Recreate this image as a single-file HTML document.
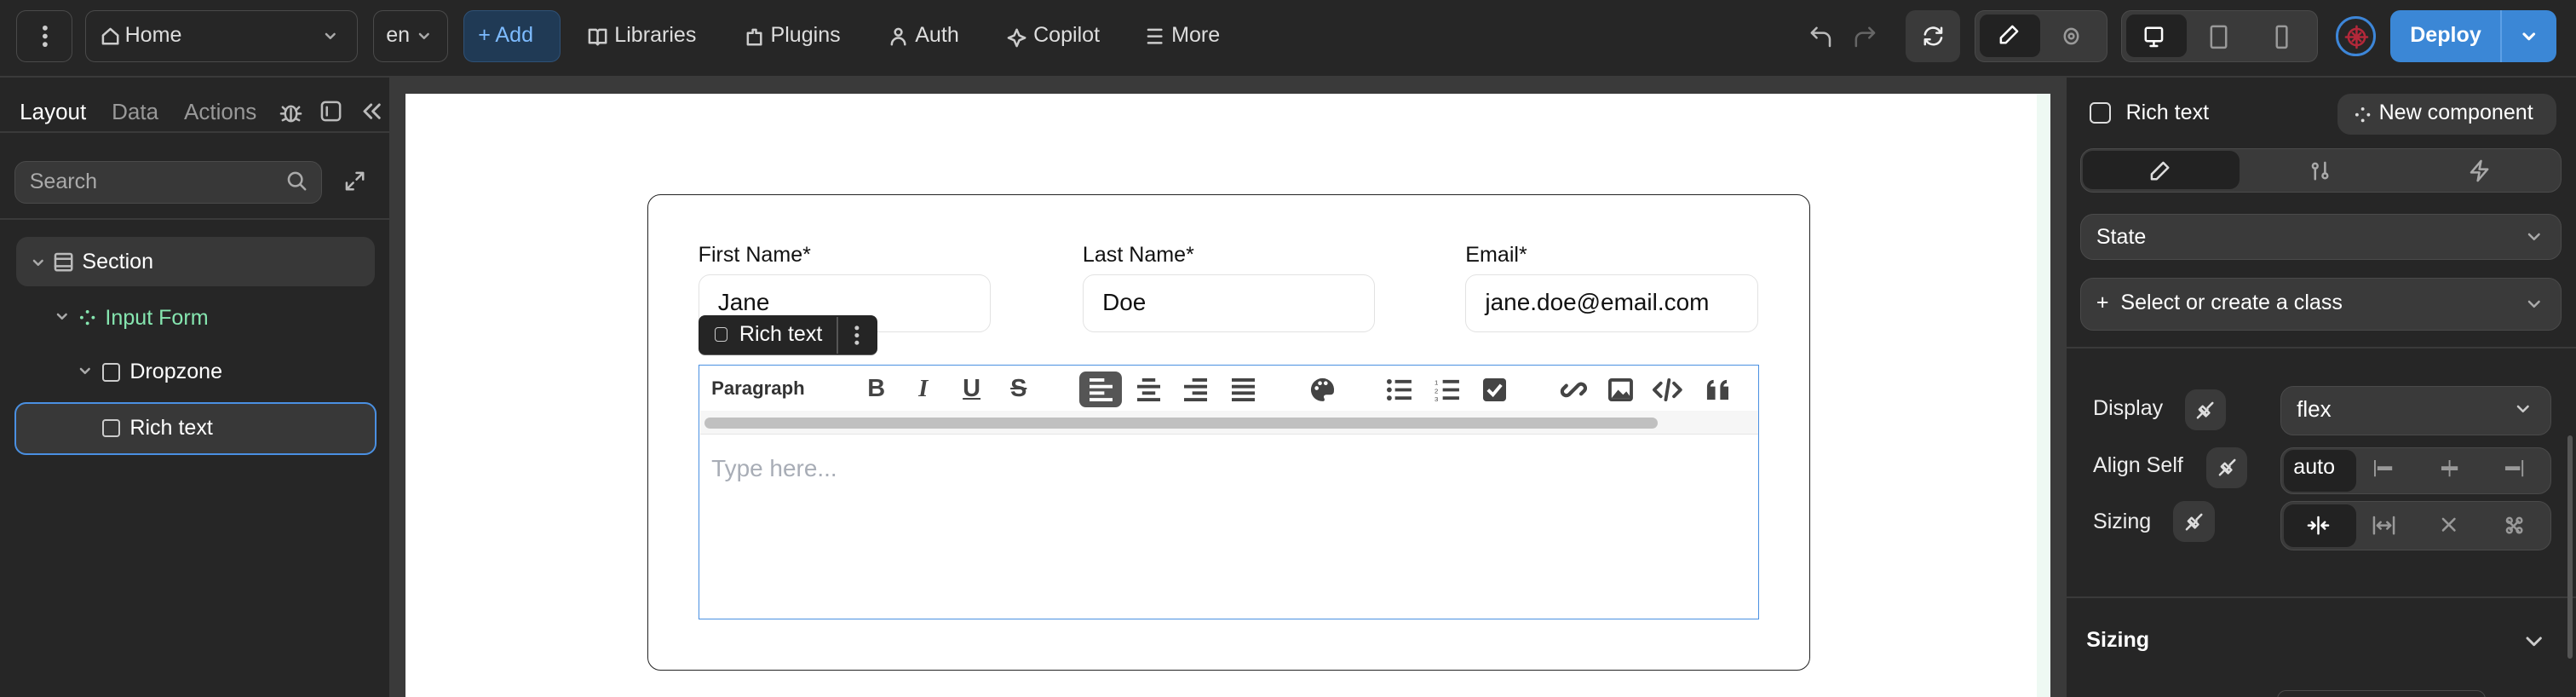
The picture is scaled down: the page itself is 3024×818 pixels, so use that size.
<!DOCTYPE html>
<html><head><meta charset="utf-8"><style>
html,body{margin:0;padding:0;width:3024px;height:818px;overflow:hidden;background:#262626}
#r{position:absolute;left:0;top:0;width:1568px;height:424px;zoom:1.928571;font-family:"Liberation Sans",sans-serif;color:#e8e8e8;font-size:13px;overflow:hidden;background:#262626}
.a{position:absolute}
.btn{position:absolute;border:1px solid #4a4a4a;border-radius:6px;box-sizing:border-box}
.t{position:absolute;white-space:nowrap;line-height:1}
svg{position:absolute;overflow:visible}
.ic{fill:none;stroke:currentColor;stroke-width:1.3;stroke-linecap:round;stroke-linejoin:round}
</style></head><body><div id="r">
<!-- top bar -->
<div class="a" style="left:0;top:46px;width:1568px;height:1px;background:#3a3a3a"></div>
<div class="btn" style="left:10px;top:6px;width:34px;height:32px"></div>
<svg style="left:26px;top:15px" width="3" height="14"><circle cx="1.5" cy="2" r="1.5" fill="#ccc"/><circle cx="1.5" cy="7" r="1.5" fill="#ccc"/><circle cx="1.5" cy="12" r="1.5" fill="#ccc"/></svg>
<div class="btn" style="left:52px;top:6px;width:166px;height:32px"></div>
<svg class="ic" style="left:61px;top:16px;color:#ccc" width="12" height="12"><path d="M1.5 5.5L6 1.5l4.5 4v5h-9z"/></svg>
<div class="t" style="left:76px;top:15px;color:#ddd">Home</div>
<svg class="ic" style="left:198px;top:20px;color:#aaa" width="6" height="4"><path d="M0.5 0.5l2.5 2.5 2.5-2.5"/></svg>
<div class="btn" style="left:227px;top:6px;width:46px;height:32px"></div>
<div class="t" style="left:235px;top:15px;color:#ddd">en</div>
<svg class="ic" style="left:255px;top:20px;color:#aaa" width="6" height="4"><path d="M0.5 0.5l2.5 2.5 2.5-2.5"/></svg>
<div class="btn" style="left:282px;top:6px;width:59px;height:32px;background:#203a55;border-color:#2f5176"></div>
<div class="t" style="left:291px;top:15px;color:#7dbbff">+ Add</div>
<svg class="ic" style="left:358px;top:16px;color:#ccc" width="12" height="12"><path d="M1 2h4l1 1 1-1h4v8H7l-1 1-1-1H1zM6 3v8"/></svg>
<div class="t" style="left:374px;top:15px;color:#ddd">Libraries</div>
<svg class="ic" style="left:453px;top:16px;color:#ccc" width="12" height="12"><path d="M2 4h3V2h2v2h3v7H2z"/></svg>
<div class="t" style="left:469px;top:15px;color:#ddd">Plugins</div>
<svg class="ic" style="left:541px;top:16px;color:#ccc" width="12" height="12"><circle cx="6" cy="3.5" r="2"/><path d="M2 11a4 4 0 0 1 8 0"/></svg>
<div class="t" style="left:557px;top:15px;color:#ddd">Auth</div>
<svg class="ic" style="left:613px;top:15px;color:#ccc" width="12" height="13"><path d="M6 3l1.5 3.5L11 8l-3.5 1.5L6 13l-1.5-3.5L1 8l3.5-1.5z"/></svg>
<div class="t" style="left:629px;top:15px;color:#ddd">Copilot</div>
<svg class="ic" style="left:698px;top:17px;color:#ccc" width="10" height="10"><path d="M1 1h8M1 5h8M1 9h8"/></svg>
<div class="t" style="left:713px;top:15px;color:#ddd">More</div>
<svg class="ic" style="left:1100px;top:14px;color:#bbb" width="16" height="16"><path d="M3 6h7a4 4 0 0 1 4 4v4M3 6l3-3M3 6l3 3"/></svg>
<svg class="ic" style="left:1128px;top:14px;color:#666" width="16" height="16"><path d="M13 6H6a4 4 0 0 0-4 4v4M13 6l-3-3M13 6l-3 3"/></svg>
<div class="btn" style="left:1160px;top:6px;width:33px;height:32px;background:#3a3a3a;border-color:#3a3a3a"></div>
<svg class="ic" style="left:1169px;top:14px;color:#eee" width="16" height="16"><path d="M3 7a5 5 0 0 1 9-2l1 1M13 9a5 5 0 0 1-9 2l-1-1M13 3v3h-3M3 13v-3h3"/></svg>
<div class="btn" style="left:1202px;top:6px;width:81px;height:32px;background:#3a3a3a"></div>
<div class="a" style="left:1205px;top:9px;width:37px;height:26px;border-radius:5px;background:#222"></div>
<svg class="ic" style="left:1216px;top:15px;color:#fff" width="14" height="14"><path d="M9 1l3 3-7 7H2V8z"/></svg>
<svg class="ic" style="left:1254px;top:15px;color:#999" width="14" height="14"><ellipse cx="7" cy="7" rx="4" ry="4.5"/><circle cx="7" cy="7" r="1.5"/></svg>
<div class="btn" style="left:1291px;top:6px;width:120px;height:32px;background:#3a3a3a"></div>
<div class="a" style="left:1294px;top:9px;width:37px;height:26px;border-radius:5px;background:#222"></div>
<svg class="ic" style="left:1303px;top:14px;color:#fff" width="16" height="16"><rect x="3" y="3" width="10" height="8" rx="1"/><path d="M8 11v2M6 14h4"/></svg>
<svg class="ic" style="left:1344px;top:14px;color:#999" width="14" height="16"><rect x="2" y="2" width="9" height="13" rx="1"/></svg>
<svg class="ic" style="left:1383px;top:14px;color:#999" width="14" height="16"><rect x="3" y="2" width="6" height="13" rx="1"/></svg>
<div class="a" style="left:1422px;top:10px;width:21px;height:21px;border:2px solid #3d86d8;border-radius:50%;background:#262626"></div>
<svg class="ic" style="left:1427px;top:15px;color:#b4283a" width="15" height="15"><circle cx="7.5" cy="7.5" r="5"/><path d="M7.5 1v13M1 7.5h13M5 5l5 5M10 5l-5 5"/></svg>
<div class="a" style="left:1455px;top:6px;width:101px;height:32px;border-radius:6px;background:#3b87d6"></div>
<div class="a" style="left:1522px;top:6px;width:1px;height:32px;background:#5da0e6"></div>
<div class="t" style="left:1467px;top:15px;color:#fff;font-weight:bold">Deploy</div>
<svg class="ic" style="left:1536px;top:20px;color:#fff;stroke-width:1.6" width="7" height="5"><path d="M0.5 0.5l3 3 3-3"/></svg>

<!-- left panel -->
<div class="a" style="left:237px;top:47px;width:1px;height:377px;background:#3a3a3a"></div>
<div class="t" style="left:12px;top:61px;color:#fff;font-size:13.5px">Layout</div>
<div class="t" style="left:68px;top:61px;color:#999;font-size:13.5px">Data</div>
<div class="t" style="left:112px;top:61px;color:#999;font-size:13.5px">Actions</div>
<svg class="ic" style="left:170px;top:61px;color:#bbb" width="14" height="14"><ellipse cx="7" cy="8" rx="3.5" ry="4.5"/><path d="M1 8h2M11 8h2M2 4l2 2M12 4l-2 2M2 12l2-1M12 12l-2-1M7 5v7"/></svg>
<svg class="ic" style="left:195px;top:61px;color:#bbb" width="14" height="14"><rect x="1" y="1" width="11" height="11" rx="2"/><path d="M4 4v5"/></svg>
<svg class="ic" style="left:221px;top:63px;color:#bbb;stroke-width:1.5" width="11" height="10"><path d="M5 1L1 5l4 4M10 1L6 5l4 4"/></svg>
<div class="a" style="left:0;top:80px;width:237px;height:1px;background:#3a3a3a"></div>
<div class="a" style="left:9px;top:98px;width:187px;height:26px;border:1px solid #4a4a4a;border-radius:7px;background:#383838;box-sizing:border-box"></div>
<div class="t" style="left:18px;top:104px;color:#aaa;font-size:13px">Search</div>
<svg class="ic" style="left:175px;top:104px;color:#aaa" width="12" height="12"><circle cx="5" cy="5" r="4"/><path d="M8 8l3 3"/></svg>
<svg class="ic" style="left:210px;top:104px;color:#bbb" width="12" height="12"><path d="M7 1h4v4M11 1L7 5M5 11H1V7M1 11l4-4"/></svg>
<div class="a" style="left:0;top:133px;width:237px;height:1px;background:#3a3a3a"></div>
<div class="a" style="left:10px;top:144px;width:218px;height:30px;border-radius:7px;background:#383838"></div>
<svg class="ic" style="left:20px;top:158px;color:#aaa" width="6" height="4"><path d="M0.5 0.5l2.5 2.5 2.5-2.5"/></svg>
<svg class="ic" style="left:33px;top:154px;color:#bbb" width="12" height="12"><rect x="0.5" y="0.5" width="10" height="10" rx="1"/><path d="M0.5 3.5h10M0.5 8h10"/></svg>
<div class="t" style="left:50px;top:153px;color:#fff;font-size:13px">Section</div>
<svg class="ic" style="left:35px;top:191px;color:#aaa" width="6" height="4"><path d="M0.5 0.5l2.5 2.5 2.5-2.5"/></svg>
<svg style="left:48px;top:188px" width="10" height="10"><circle cx="5" cy="1.5" r="1" fill="#86e6b0"/><circle cx="1.5" cy="5" r="1" fill="#86e6b0"/><circle cx="8.5" cy="5" r="1" fill="#86e6b0"/><circle cx="5" cy="8.5" r="1" fill="#86e6b0"/></svg>
<div class="t" style="left:64px;top:187px;color:#86e6b0;font-size:13px">Input Form</div>
<svg class="ic" style="left:49px;top:224px;color:#aaa" width="6" height="4"><path d="M0.5 0.5l2.5 2.5 2.5-2.5"/></svg>
<div class="a" style="left:62px;top:221px;width:9px;height:9px;border:1.2px solid #ccc;border-radius:2px"></div>
<div class="t" style="left:79px;top:220px;color:#fff;font-size:13px">Dropzone</div>
<div class="a" style="left:9px;top:245px;width:220px;height:32px;border:1.3px solid #4a90e2;border-radius:7px;background:#383838;box-sizing:border-box"></div>
<div class="a" style="left:62px;top:255px;width:9px;height:9px;border:1.2px solid #ccc;border-radius:2px"></div>
<div class="t" style="left:79px;top:254px;color:#fff;font-size:13px">Rich text</div>

<!-- canvas -->
<div class="a" style="left:238px;top:47px;width:1019px;height:377px;background:#3a3a3a"></div>
<div class="a" style="left:247px;top:57px;width:1001px;height:367px;background:#fff"></div>
<div class="a" style="left:1240px;top:57px;width:8px;height:367px;background:#eef9f3"></div>
<div class="a" style="left:394px;top:118px;width:708px;height:290px;border:1px solid #222;border-radius:8px;box-sizing:border-box"></div>
<div class="t" style="left:425px;top:149px;color:#111;font-size:13px">First Name*</div>
<div class="t" style="left:659px;top:149px;color:#111;font-size:13px">Last Name*</div>
<div class="t" style="left:892px;top:149px;color:#111;font-size:13px">Email*</div>
<div class="a" style="left:425px;top:167px;width:178px;height:35px;border:1px solid #e2e2e2;border-radius:7px;box-sizing:border-box"></div>
<div class="a" style="left:659px;top:167px;width:178px;height:35px;border:1px solid #e2e2e2;border-radius:7px;box-sizing:border-box"></div>
<div class="a" style="left:892px;top:167px;width:178px;height:35px;border:1px solid #e2e2e2;border-radius:7px;box-sizing:border-box"></div>
<div class="t" style="left:437px;top:177px;color:#111;font-size:14.5px">Jane</div>
<div class="t" style="left:671px;top:177px;color:#111;font-size:14.5px">Doe</div>
<div class="t" style="left:904px;top:177px;color:#111;font-size:14.5px">jane.doe@email.com</div>
<div class="a" style="left:425px;top:192px;width:109px;height:24px;border-radius:4px;background:#252525;border-bottom:1px solid #666;box-sizing:border-box"></div>
<div class="a" style="left:509px;top:193px;width:1px;height:22px;background:#555"></div>
<div class="a" style="left:435px;top:199px;width:7px;height:8px;border:1px solid #ccc;border-radius:2px"></div>
<div class="t" style="left:450px;top:197px;color:#fff;font-size:13px">Rich text</div>
<svg style="left:520px;top:198px" width="3" height="12"><circle cx="1.5" cy="1.5" r="1.3" fill="#ccc"/><circle cx="1.5" cy="6" r="1.3" fill="#ccc"/><circle cx="1.5" cy="10.5" r="1.3" fill="#ccc"/></svg>
<div class="a" style="left:425px;top:222px;width:646px;height:155px;border:1px solid #4a90e2;box-sizing:border-box"></div>
<div class="a" style="left:426px;top:250px;width:644px;height:14px;background:#f6f6f6;border-bottom:1px solid #e6e6e6"></div>
<div class="a" style="left:429px;top:254px;width:580px;height:7px;border-radius:4px;background:#c0c0c0"></div>
<div class="t" style="left:433px;top:231px;color:#333;font-size:11.5px;font-weight:bold">Paragraph</div>
<div class="t" style="left:528px;top:229px;color:#444;font-size:15px;font-weight:bold">B</div>
<div class="t" style="left:559px;top:229px;color:#444;font-size:15px;font-style:italic;font-family:'Liberation Serif',serif;font-weight:bold">I</div>
<div class="t" style="left:586px;top:229px;color:#444;font-size:15px;font-weight:bold;text-decoration:underline">U</div>
<div class="t" style="left:615px;top:229px;color:#444;font-size:15px;font-weight:bold;text-decoration:line-through">S</div>
<div class="a" style="left:657px;top:226px;width:26px;height:22px;border-radius:4px;background:#555"></div>
<svg style="left:663px;top:230px" width="14" height="14"><path d="M0 1h9M0 5h14M0 9h9M0 13h14" stroke="#fff" stroke-width="2"/></svg>
<svg style="left:692px;top:230px" width="14" height="14"><path d="M3 1h8M0 5h14M3 9h8M0 13h14" stroke="#444" stroke-width="2"/></svg>
<svg style="left:721px;top:230px" width="14" height="14"><path d="M5 1h9M0 5h14M5 9h9M0 13h14" stroke="#444" stroke-width="2"/></svg>
<svg style="left:750px;top:230px" width="14" height="14"><path d="M0 1h14M0 5h14M0 9h14M0 13h14" stroke="#444" stroke-width="2"/></svg>
<svg style="left:797px;top:229px" width="16" height="16"><path d="M8 1a7 7 0 0 0 0 14c1.5 0 1.5-1 1-2s0-2 1.5-2H13a2 2 0 0 0 2-2A7 7 0 0 0 8 1z" fill="#444"/><circle cx="4.5" cy="7" r="1.2" fill="#fff"/><circle cx="6.5" cy="4" r="1.2" fill="#fff"/><circle cx="10" cy="4" r="1.2" fill="#fff"/></svg>
<svg style="left:844px;top:230px" width="16" height="14"><path d="M5 2h10M5 7h10M5 12h10" stroke="#444" stroke-width="2"/><circle cx="1.5" cy="2" r="1.5" fill="#444"/><circle cx="1.5" cy="7" r="1.5" fill="#444"/><circle cx="1.5" cy="12" r="1.5" fill="#444"/></svg>
<svg style="left:873px;top:230px" width="16" height="14"><path d="M5 2h10M5 7h10M5 12h10" stroke="#444" stroke-width="2"/><text x="0" y="4" font-size="4" fill="#444">1</text><text x="0" y="9" font-size="4" fill="#444">2</text><text x="0" y="14" font-size="4" fill="#444">3</text></svg>
<svg style="left:903px;top:230px" width="14" height="14"><rect width="14" height="14" rx="2" fill="#444"/><path d="M3 7l3 3 5-6" stroke="#fff" stroke-width="2" fill="none"/></svg>
<svg class="ic" style="left:950px;top:229px;color:#444;stroke-width:2.2" width="16" height="16"><path d="M7 9l-2 2a2.5 2.5 0 0 1-3.5-3.5l2-2M9 7l2-2a2.5 2.5 0 0 1 3.5 3.5l-2 2M6 10l4-4"/></svg>
<svg style="left:979px;top:230px" width="15" height="14"><rect x="1" y="1" width="13" height="12" rx="1" fill="none" stroke="#444" stroke-width="2"/><path d="M2 12l4-5 3 3 2-2 3 4z" fill="#444"/></svg>
<svg class="ic" style="left:1006px;top:230px;color:#444;stroke-width:2" width="18" height="14"><path d="M5 3L1 7l4 4M13 3l4 4-4 4M10 1L8 13"/></svg>
<svg style="left:1038px;top:230px" width="15" height="14"><path d="M1 5a4 4 0 0 1 4-4v2a2 2 0 0 0-2 2h3v8H1zM9 5a4 4 0 0 1 4-4v2a2 2 0 0 0-2 2h3v8H9z" fill="#444"/></svg>
<div class="t" style="left:433px;top:278px;color:#a8adb6;font-size:14.5px">Type here...</div>

<!-- right panel -->
<div class="a" style="left:1257px;top:47px;width:1px;height:377px;background:#3a3a3a"></div>
<div class="a" style="left:1272px;top:62px;width:11px;height:11px;border:1.3px solid #ddd;border-radius:3px"></div>
<div class="t" style="left:1294px;top:62px;color:#fff;font-size:13px">Rich text</div>
<div class="a" style="left:1423px;top:57px;width:133px;height:25px;border-radius:8px;background:#3a3a3a"></div>
<svg style="left:1433px;top:65px" width="10" height="10"><circle cx="5" cy="1.5" r="1" fill="#ddd"/><circle cx="1.5" cy="5" r="1" fill="#ddd"/><circle cx="8.5" cy="5" r="1" fill="#ddd"/><circle cx="5" cy="8.5" r="1" fill="#ddd"/></svg>
<div class="t" style="left:1448px;top:62px;color:#fff;font-size:13px">New component</div>
<div class="a" style="left:1266px;top:90px;width:293px;height:27px;border:1px solid #4a4a4a;border-radius:8px;background:#3a3a3a;box-sizing:border-box"></div>
<div class="a" style="left:1268px;top:92px;width:95px;height:23px;border-radius:6px;background:#222"></div>
<svg class="ic" style="left:1309px;top:98px;color:#ddd" width="12" height="12"><path d="M8 1l3 3-7 7H1V8z"/></svg>
<svg class="ic" style="left:1406px;top:98px;color:#aaa" width="12" height="12"><circle cx="3" cy="3" r="1.5"/><circle cx="9" cy="9" r="1.5"/><path d="M3 5v6M9 1v6"/></svg>
<svg class="ic" style="left:1503px;top:97px;color:#aaa" width="12" height="14"><path d="M7 1L1 8h5l-1 5 6-7H6z"/></svg>
<div class="a" style="left:1266px;top:130px;width:293px;height:28px;border:1px solid #4a4a4a;border-radius:8px;background:#3a3a3a;box-sizing:border-box"></div>
<div class="t" style="left:1276px;top:138px;color:#fff;font-size:13px">State</div>
<svg class="ic" style="left:1539px;top:142px;color:#aaa" width="7" height="5"><path d="M0.5 0.5l3 3 3-3"/></svg>
<div class="a" style="left:1266px;top:169px;width:293px;height:32px;border:1px solid #4a4a4a;border-radius:8px;background:#3a3a3a;box-sizing:border-box"></div>
<div class="t" style="left:1276px;top:178px;color:#fff;font-size:13px">+&nbsp; Select or create a class</div>
<svg class="ic" style="left:1539px;top:183px;color:#aaa" width="7" height="5"><path d="M0.5 0.5l3 3 3-3"/></svg>
<div class="a" style="left:1258px;top:211px;width:310px;height:1px;background:#3a3a3a"></div>
<div class="t" style="left:1274px;top:242px;color:#eee;font-size:13px">Display</div>
<div class="a" style="left:1330px;top:237px;width:25px;height:25px;border-radius:7px;background:#3a3a3a"></div>
<svg class="ic" style="left:1337px;top:244px;color:#ddd" width="11" height="11"><path d="M1 10l3-3M10 1L7 4M3 5l3 3M4 3l4 4-2 2-4-4zM5 7l2-2"/></svg>
<div class="a" style="left:1388px;top:235px;width:165px;height:30px;border:1px solid #4a4a4a;border-radius:8px;background:#3a3a3a;box-sizing:border-box"></div>
<div class="t" style="left:1398px;top:242px;color:#fff;font-size:13.5px">flex</div>
<svg class="ic" style="left:1532px;top:247px;color:#ccc" width="7" height="5"><path d="M0.5 0.5l3 3 3-3"/></svg>
<div class="t" style="left:1274px;top:277px;color:#eee;font-size:13px">Align Self</div>
<div class="a" style="left:1343px;top:272px;width:25px;height:25px;border-radius:7px;background:#3a3a3a"></div>
<svg class="ic" style="left:1350px;top:279px;color:#ddd" width="11" height="11"><path d="M1 10l3-3M10 1L7 4M3 5l3 3M4 3l4 4-2 2-4-4zM5 7l2-2"/></svg>
<div class="a" style="left:1388px;top:272px;width:165px;height:29px;border:1px solid #4a4a4a;border-radius:8px;background:#3a3a3a;box-sizing:border-box"></div>
<div class="a" style="left:1390px;top:274px;width:44px;height:25px;border-radius:6px;background:#222"></div>
<div class="t" style="left:1396px;top:278px;color:#fff;font-size:13px">auto</div>
<svg style="left:1445px;top:280px" width="12" height="10"><path d="M0.5 0v10" stroke="#999"/><path d="M2 5h9" stroke="#999" stroke-width="2.5"/></svg>
<svg style="left:1485px;top:280px" width="12" height="10"><path d="M6 0v10" stroke="#999"/><path d="M1 5h10" stroke="#999" stroke-width="2.5"/></svg>
<svg style="left:1524px;top:280px" width="12" height="10"><path d="M11.5 0v10" stroke="#999"/><path d="M1 5h9" stroke="#999" stroke-width="2.5"/></svg>
<div class="t" style="left:1274px;top:311px;color:#eee;font-size:13px">Sizing</div>
<div class="a" style="left:1323px;top:305px;width:25px;height:25px;border-radius:7px;background:#3a3a3a"></div>
<svg class="ic" style="left:1330px;top:312px;color:#ddd" width="11" height="11"><path d="M1 10l3-3M10 1L7 4M3 5l3 3M4 3l4 4-2 2-4-4zM5 7l2-2"/></svg>
<div class="a" style="left:1388px;top:305px;width:165px;height:30px;border:1px solid #4a4a4a;border-radius:8px;background:#3a3a3a;box-sizing:border-box"></div>
<div class="a" style="left:1390px;top:307px;width:44px;height:26px;border-radius:6px;background:#222"></div>
<svg class="ic" style="left:1404px;top:315px;color:#fff" width="14" height="10"><path d="M7 0v10M1 5h4M3 3l2 2-2 2M13 5H9M11 3L9 5l2 2"/></svg>
<svg class="ic" style="left:1444px;top:315px;color:#999" width="14" height="10"><path d="M1 0v10M13 0v10M3 5h8M5 3L3 5l2 2M9 3l2 2-2 2"/></svg>
<svg class="ic" style="left:1486px;top:315px;color:#999" width="9" height="9"><path d="M1 1l7 7M8 1L1 8"/></svg>
<svg class="ic" style="left:1525px;top:314px;color:#999" width="11" height="11"><path d="M2 3l6 6M3 8l5-5"/><circle cx="2.5" cy="2.5" r="1.5"/><circle cx="8.5" cy="2.5" r="1.5"/><circle cx="2.5" cy="8.5" r="1.5"/><circle cx="8.5" cy="8.5" r="1.5"/></svg>
<div class="a" style="left:1258px;top:363px;width:310px;height:1px;background:#3a3a3a"></div>
<div class="t" style="left:1270px;top:383px;color:#fff;font-size:13px;font-weight:bold">Sizing</div>
<svg class="ic" style="left:1538px;top:388px;color:#ccc;stroke-width:1.5" width="9" height="6"><path d="M0.5 0.5l4 4 4-4"/></svg>
<div class="a" style="left:1563px;top:265px;width:3px;height:136px;border-radius:2px;background:#555"></div>
<div class="a" style="left:1386px;top:420px;width:126px;height:10px;border:1px solid #4a4a4a;border-radius:8px"></div>
</div></body></html>
